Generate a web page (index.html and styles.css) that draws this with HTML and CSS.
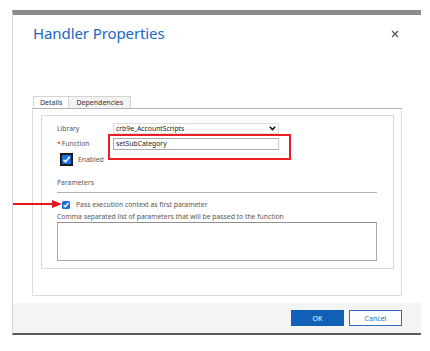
FILE: index.html
```html
<!DOCTYPE html>
<html lang="en">
<head>
    <meta charset="UTF-8">
    <title>Handler Properties</title>
    <link rel="stylesheet" href="styles.css">
</head>
<body>
    <div class="dialog">
        <div class="dialog-body">
            <div class="dialog-head">
                <h1 class="title">Handler Properties</h1>
                <svg class="close" width="8" height="8" viewBox="0 0 8 8">
                    <path d="M1 1L7 7M7 1L1 7" stroke="#555" stroke-width="1.3"/>
                </svg>
            </div>

            <div class="tabs">
                <span class="tab active">Details</span>
                <span class="tab">Dependencies</span>
            </div>

            <div class="tab-panel">
                <div class="group">
                    <div class="field-row">
                        <label>Library</label>
                        <div class="select">
                            <span>crb9e_AccountScripts</span>
                            <svg width="7" height="5" viewBox="0 0 7 5"><path d="M0.8 0.8L3.5 3.6L6.2 0.8" fill="none" stroke="#111" stroke-width="1.5"/></svg>
                        </div>
                    </div>
                    <div class="field-row">
                        <label><span class="req">*</span>Function</label>
                        <div class="input">setSubCategory</div>
                    </div>
                    <div class="check-row">
                        <span class="check big">
                            <svg width="9" height="9" viewBox="0 0 9 9"><path d="M1.5 4.8L3.6 6.9L7.6 1.8" fill="none" stroke="#fff" stroke-width="1.6"/></svg>
                        </span>
                        <span>Enabled</span>
                    </div>

                    <div class="section-label">Parameters</div>
                    <div class="check-row small">
                        <span class="check">
                            <svg width="8" height="8" viewBox="0 0 8 8"><path d="M1.6 4.2L3.3 5.8L6.4 2" fill="none" stroke="#fff" stroke-width="1.4"/></svg>
                        </span>
                        <span>Pass execution context as first parameter</span>
                    </div>
                    <div class="hint">Comma separated list of parameters that will be passed to the function</div>
                    <div class="textarea"></div>
                </div>
            </div>
        </div>

        <div class="dialog-foot">
            <button class="btn primary">OK</button>
            <button class="btn">Cancel</button>
        </div>

        <!-- annotations drawn over the screenshot -->
        <div class="callout-box"></div>
        <svg class="callout-arrow" width="50" height="10" viewBox="0 0 50 10">
            <path d="M0 5H42" stroke="#e8151b" stroke-width="2"/>
            <path d="M39 1L49 5L39 9Z" fill="#e8151b"/>
        </svg>
    </div>
</body>
</html>
```

FILE: styles.css
```css
body {
    margin: 0;
    background: #fff;
    font-family: "Noto Sans", "Open Sans", sans-serif;
    color: #444;
}

.dialog {
    position: relative;
    margin: 10px 0 0 12px;
    width: 408px;
    border-top: 5px solid #8c8c8c;
    border-left: 1px solid #d6d6d6;
    border-bottom: 2px solid #5a5a5a;
}

.dialog-body {
    height: 288px;
    background: #fff;
}

.dialog-head {
    display: flex;
    justify-content: space-between;
    align-items: flex-start;
    height: 81px;
    padding: 0 22px 0 20px;
}

.title {
    margin: 8px 0 0;
    font-size: 15px;
    font-weight: normal;
    color: #2068c4;
    letter-spacing: -0.1px;
}

.close {
    margin-top: 15px;
}

.tabs {
    display: flex;
    height: 12px;
    padding-left: 20px;
}

.tab {
    padding: 0 7px;
    font-size: 7px;
    line-height: 11px;
    color: #333;
    border: 1px solid #d4d4d4;
    border-bottom: none;
    background: #f3f3f3;
}

.tab.active {
    background: #fff;
    padding: 0 6px;
}

.tab + .tab {
    border-left: none;
}

.tab-panel {
    margin-left: 19px;
    width: 368px;
    height: 186px;
    border: 1px solid #dcdcdc;
    border-top-color: #b4b4b4;
}

.group {
    margin: 6px 7px 0 8px;
    height: 138px;
    padding: 7px 16px 7px 15px;
    border: 1px solid #d8d8d8;
    font-size: 6.8px;
}

.field-row {
    display: flex;
    align-items: center;
    height: 11px;
    margin-bottom: 4px;
}

.field-row label {
    width: 56px;
    color: #555;
}

.req {
    color: #d0202a;
    margin-right: 1px;
}

.select {
    display: flex;
    align-items: center;
    justify-content: space-between;
    box-sizing: border-box;
    width: 166px;
    height: 11px;
    padding: 0 2px 0 2px;
    border: 1px solid #dedede;
    color: #222;
}

.input {
    box-sizing: border-box;
    width: 166px;
    height: 12px;
    line-height: 9px;
    padding: 0 2px;
    border: 1px solid #a8a8a8;
    border-right-color: #c8c8c8;
    color: #222;
}

.check-row {
    display: flex;
    align-items: center;
    gap: 5px;
    margin-left: 3px;
    color: #555;
}

.check {
    display: flex;
    align-items: center;
    justify-content: center;
    width: 8px;
    height: 8px;
    border-radius: 1.5px;
    background: #1c6fdc;
}

.check.big {
    width: 9px;
    height: 9px;
    border: 2px solid #1a1a1a;
    border-radius: 0;
    background: #1c6fdc;
}

.section-label {
    margin-top: 12px;
    padding: 0 0 5px;
    border-bottom: 1px solid #b0b0b0;
    color: #555;
}

.check-row.small {
    margin: 7px 0 0 5px;
    gap: 6px;
}

.hint {
    margin-top: 3px;
    color: #555;
}

.textarea {
    margin-top: 1px;
    height: 37px;
    border: 1px solid #a8a8a8;
    border-top-color: #909090;
}

.dialog-foot {
    display: flex;
    justify-content: flex-end;
    gap: 5px;
    height: 30px;
    box-sizing: border-box;
    padding: 7px 19px 0 0;
    background: #f4f4f4;
}

.btn {
    width: 53px;
    height: 16px;
    padding: 0;
    font-family: inherit;
    font-size: 7px;
    color: #2d6fc8;
    background: #fff;
    border: 1px solid #2d6fc8;
}

.btn.primary {
    color: #fff;
    background: #1160b7;
    border-color: #1160b7;
}

.callout-box {
    position: absolute;
    left: 95px;
    top: 119px;
    width: 179px;
    height: 22px;
    border: 2px solid #ee1c24;
}

.callout-arrow {
    position: absolute;
    left: 0;
    top: 184px;
}
```
